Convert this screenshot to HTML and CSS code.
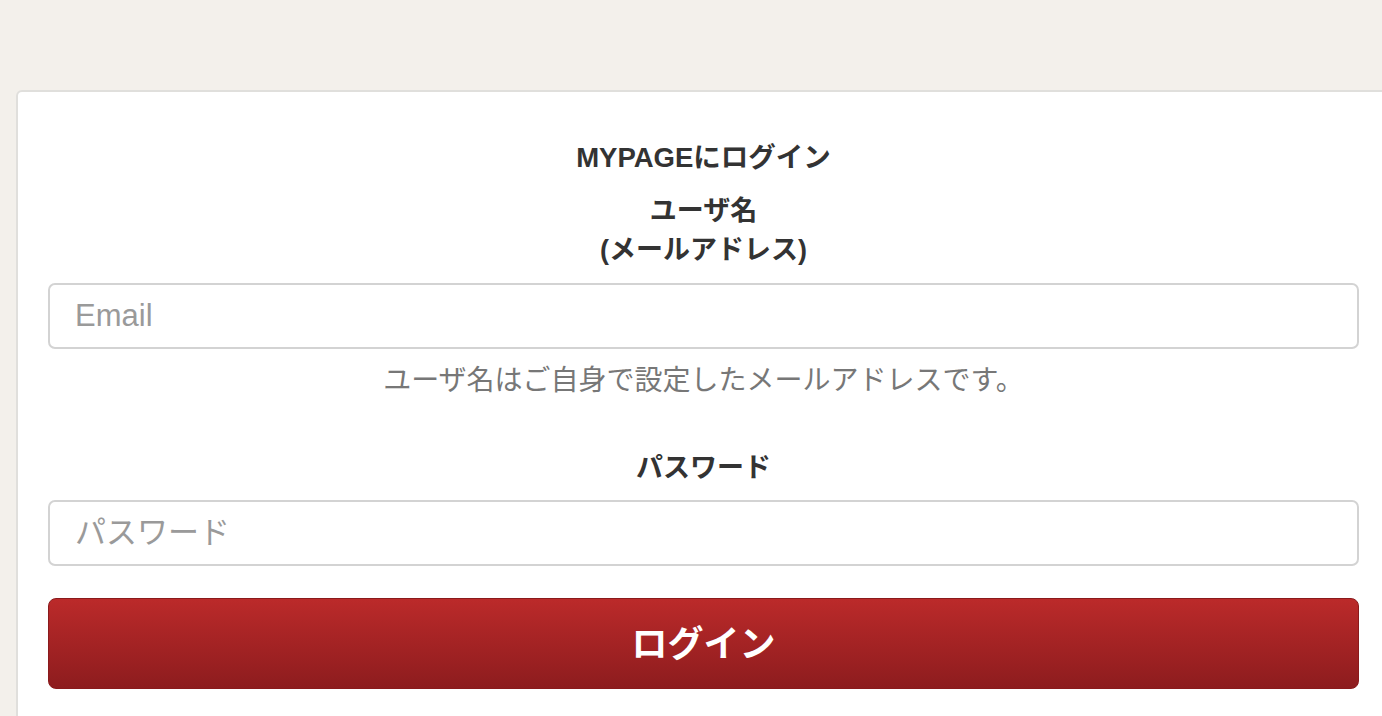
FILE: index.html
```html
<!DOCTYPE html>
<html lang="ja">
<head>
    <meta charset="UTF-8">
    <meta name="viewport" content="width=device-width, initial-scale=1.0">
    <title>MYPAGEにログイン</title>
    <link rel="stylesheet" href="styles.css">
</head>
<body>
    <div class="login-card">
        <form class="login-form" onsubmit="return false;">
            <h2 class="login-title">MYPAGEにログイン</h2>

            <label class="field-label" for="email">ユーザ名<br>(メールアドレス)</label>
            <input class="field-input" type="email" id="email" placeholder="Email">
            <p class="field-help">ユーザ名はご自身で設定したメールアドレスです。</p>

            <label class="field-label password-label" for="password">パスワード</label>
            <input class="field-input" type="password" id="password" placeholder="パスワード">

            <button class="login-button" type="submit">ログイン</button>
        </form>
    </div>
</body>
</html>
```

FILE: styles.css
```css
html, body {
    overflow: hidden;
}
body {
    font-family: "Liberation Sans", "Noto Sans CJK JP", sans-serif;
    margin: 0;
    padding: 90px 0 0 16px;
    background-color: #f3f0eb;
    color: #333;
}
.login-card {
    width: 1375px;
    min-height: 700px;
    box-sizing: border-box;
    background-color: #fff;
    border: 2px solid #e0dfdc;
    border-radius: 6px;
    padding: 46px 30px 0 30px;
}
.login-form {
    display: flex;
    flex-direction: column;
    text-align: center;
}
.login-title {
    font-size: 27.5px;
    line-height: 39px;
    font-weight: bold;
    margin: 0 0 15px;
}
.field-label {
    font-size: 27px;
    line-height: 39px;
    font-weight: bold;
    margin-bottom: 13px;
}
.password-label {
    margin-bottom: 12px;
}
.field-input {
    height: 66px;
    box-sizing: border-box;
    border: 2px solid #d3d3d3;
    border-radius: 7px;
    padding: 0 25px;
    font-family: inherit;
    font-size: 31px;
    color: #333;
    outline: none;
}
.field-input::placeholder {
    color: #9a9a9a;
}
.field-help {
    font-size: 28px;
    line-height: 39px;
    color: #777;
    margin: 12px 0 49px;
}
.login-button {
    margin-top: 32px;
    height: 91px;
    padding-bottom: 6px;
    border: 1px solid #8a1a1c;
    border-radius: 8px;
    background: linear-gradient(to bottom, #bb2a2a, #8d1c1e);
    color: #fff;
    font-family: inherit;
    font-size: 36px;
    font-weight: bold;
    cursor: pointer;
}
```
